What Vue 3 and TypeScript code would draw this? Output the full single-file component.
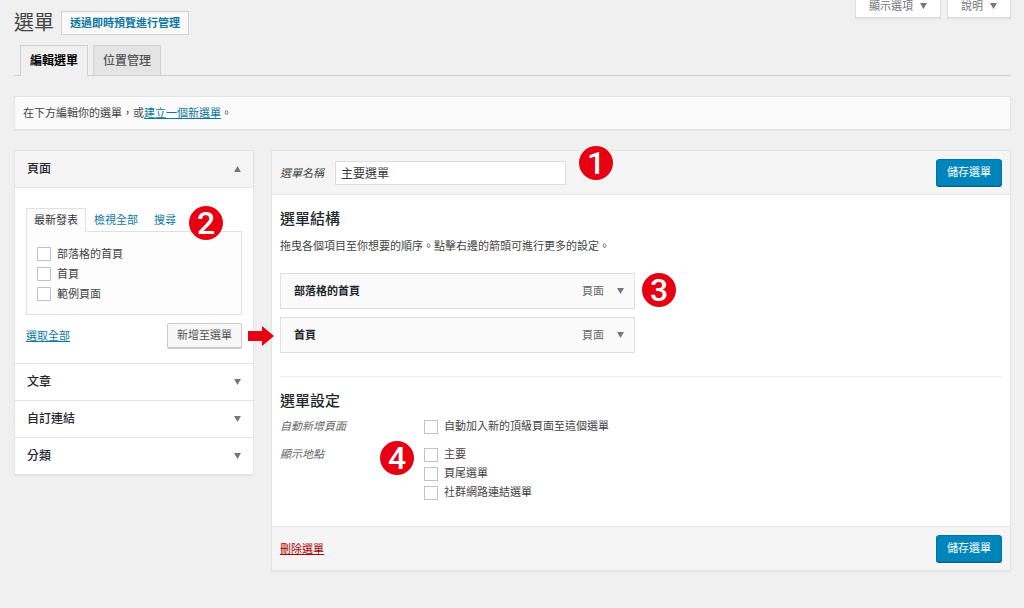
<script setup lang="ts">
import { ref } from 'vue'

interface Choice {
  id: string
  label: string
  checked: boolean
}

const menuName = ref('主要選單')

const pages = ref<Choice[]>([
  { id: 'page-blog', label: '部落格的首頁', checked: false },
  { id: 'page-home', label: '首頁', checked: false },
  { id: 'page-sample', label: '範例頁面', checked: false },
])

const closedSections: string[] = ['文章', '自訂連結', '分類']

const menuItems: { title: string; type: string }[] = [
  { title: '部落格的首頁', type: '頁面' },
  { title: '首頁', type: '頁面' },
]

const autoAdd = ref(false)

const locations = ref<Choice[]>([
  { id: 'loc-primary', label: '主要', checked: false },
  { id: 'loc-footer', label: '頁尾選單', checked: false },
  { id: 'loc-social', label: '社群網路連結選單', checked: false },
])

function selectAll(): void {
  pages.value.forEach((p) => (p.checked = true))
}
</script>

<template>
  <div class="page">
    <header class="top">
      <div class="title">
        <h1>選單</h1>
        <a class="title-action" href="#preview">透過即時預覽進行管理</a>
      </div>
      <div class="meta">
        <button type="button">
          顯示選項
          <svg class="tri" viewBox="0 0 8 7" aria-hidden="true"><path d="M0 0h8L4 7z" /></svg>
        </button>
        <button type="button">
          說明
          <svg class="tri" viewBox="0 0 8 7" aria-hidden="true"><path d="M0 0h8L4 7z" /></svg>
        </button>
      </div>
    </header>

    <nav class="tabs">
      <a class="active" href="#edit" aria-current="page">編輯選單</a>
      <a href="#locations">位置管理</a>
    </nav>

    <p class="notice">在下方編輯你的選單，或<a href="#new">建立一個新選單</a>。</p>

    <div class="columns">
      <aside class="sidebar">
        <h3 class="section-head open">
          <button type="button" aria-expanded="true">
            頁面
            <svg class="tri" viewBox="0 0 8 7" aria-hidden="true"><path d="M0 7h8L4 0z" /></svg>
          </button>
        </h3>
        <div class="section-body">
          <div class="mini-tabs">
            <a class="active" href="#recent">最新發表</a>
            <a href="#all">檢視全部</a>
            <a href="#search">搜尋</a>
            <span class="badge badge-2">2</span>
          </div>
          <div class="mini-panel">
            <label v-for="p in pages" :key="p.id" class="check">
              <input v-model="p.checked" type="checkbox" />{{ p.label }}
            </label>
          </div>
          <div class="section-actions">
            <a href="#select-all" @click.prevent="selectAll">選取全部</a>
            <button class="secondary" type="button">新增至選單</button>
            <svg class="arrow" viewBox="0 0 26 20" aria-hidden="true">
              <path d="M0 5h14V0l12 10-12 10v-5H0z" />
            </svg>
          </div>
        </div>
        <h3 v-for="s in closedSections" :key="s" class="section-head">
          <button type="button" aria-expanded="false">
            {{ s }}
            <svg class="tri" viewBox="0 0 8 7" aria-hidden="true"><path d="M0 0h8L4 7z" /></svg>
          </button>
        </h3>
      </aside>

      <main class="editor">
        <div class="bar bar-top">
          <label class="name-label" for="menu-name">選單名稱</label>
          <div class="name-field">
            <input id="menu-name" v-model="menuName" type="text" />
            <span class="badge badge-1">1</span>
          </div>
          <button class="primary" type="button">儲存選單</button>
        </div>

        <div class="content">
          <h2>選單結構</h2>
          <p class="hint">拖曳各個項目至你想要的順序。點擊右邊的箭頭可進行更多的設定。</p>
          <div class="items-wrap">
            <ul class="items">
              <li v-for="item in menuItems" :key="item.title">
                <strong>{{ item.title }}</strong>
                <span class="type">{{ item.type }}</span>
                <button type="button" :aria-label="item.title">
                  <svg class="tri" viewBox="0 0 8 7" aria-hidden="true"><path d="M0 0h8L4 7z" /></svg>
                </button>
              </li>
            </ul>
            <span class="badge badge-3">3</span>
          </div>

          <section class="settings">
            <h2>選單設定</h2>
            <div class="setting" role="group" aria-labelledby="set-auto">
              <span id="set-auto" class="setting-name">自動新增頁面</span>
              <div class="options">
                <label class="check">
                  <input v-model="autoAdd" type="checkbox" />自動加入新的頂級頁面至這個選單
                </label>
              </div>
            </div>
            <div class="setting" role="group" aria-labelledby="set-loc">
              <span id="set-loc" class="setting-name">顯示地點</span>
              <div class="options">
                <label v-for="l in locations" :key="l.id" class="check">
                  <input v-model="l.checked" type="checkbox" />{{ l.label }}
                </label>
                <span class="badge badge-4">4</span>
              </div>
            </div>
          </section>
        </div>

        <div class="bar bar-bottom">
          <a class="delete" href="#delete">刪除選單</a>
          <button class="primary" type="button">儲存選單</button>
        </div>
      </main>
    </div>
  </div>
</template>

<style>
body {
  background: #f0f0f0;
}
</style>

<style scoped>
.page,
.page * {
  box-sizing: border-box;
}

.page {
  padding: 0 13px 32px 14px;
  color: #444;
  font: 11px/20px "Liberation Sans", "Noto Sans CJK TC", sans-serif;
}

h1,
h2,
h3,
p,
ul {
  margin: 0;
  padding: 0;
}

button,
input {
  font: inherit;
  color: inherit;
}

button {
  cursor: pointer;
}

a {
  color: #0f78a0;
}

.tri {
  flex: none;
  width: 7px;
  height: 6px;
  fill: #72777c;
}

.top {
  display: flex;
  justify-content: space-between;
  align-items: flex-start;
}

.title {
  display: flex;
  align-items: center;
  gap: 7px;
  padding-top: 11px;
}

h1 {
  color: #444;
  font-size: 20px;
  font-weight: 400;
  line-height: 24px;
}

.title-action {
  padding: 0 8px;
  border: 1px solid #d2d2d2;
  background: #f9f9f9;
  font-weight: 700;
  line-height: 22px;
  text-decoration: none;
}

.meta {
  display: flex;
  gap: 6px;
}

.meta button {
  display: flex;
  align-items: center;
  gap: 7px;
  padding: 0 13px 5px;
  border: 1px solid #ddd;
  border-top: 0;
  background: #fff;
  box-shadow: 0 1px 1px rgba(0, 0, 0, 0.06);
  color: #72777c;
  line-height: 12px;
}

.tabs {
  display: flex;
  gap: 5px;
  margin-top: 10px;
  padding-left: 6px;
  border-bottom: 1px solid #d0d0d0;
}

.tabs a {
  padding: 1px 9px 0;
  border: 1px solid #d0d0d0;
  border-bottom: 0;
  background: #e4e4e4;
  color: #555;
  font-size: 12px;
  font-weight: 500;
  line-height: 28px;
  text-decoration: none;
}

.tabs .active {
  margin-bottom: -1px;
  padding-bottom: 1px;
  background: #f0f0f0;
  color: #000;
  font-weight: 700;
}

.notice {
  margin-top: 20px;
  padding: 6px 8px;
  border: 1px solid #e4e4e4;
  background: #fbfbfb;
  box-shadow: 0 1px 1px rgba(0, 0, 0, 0.04);
}

.columns {
  display: flex;
  align-items: flex-start;
  gap: 17px;
  margin-top: 20px;
}

.sidebar {
  flex: none;
  width: 240px;
  border: 1px solid #e4e4e4;
  background: #fff;
  box-shadow: 0 1px 1px rgba(0, 0, 0, 0.05);
}

.section-head {
  border-top: 1px solid #e4e4e4;
}

.section-head.open {
  border-top: 0;
  border-bottom: 1px solid #e4e4e4;
  background: #f5f5f5;
}

.section-head button {
  display: flex;
  justify-content: space-between;
  align-items: center;
  width: 100%;
  padding: 0 12px;
  border: 0;
  background: none;
  color: #23282d;
  font-size: 12px;
  font-weight: 500;
  line-height: 36px;
}

.section-body {
  padding: 20px 11px 15px;
}

.mini-tabs {
  position: relative;
  display: flex;
  line-height: 22px;
}

.mini-tabs a {
  padding: 0 7px;
  border: 0;
  text-decoration: none;
}

.mini-tabs a + a {
  padding: 1px 8px 0;
}

.mini-tabs .active {
  z-index: 1;
  margin-bottom: -1px;
  border: 1px solid #e1e1e1;
  border-bottom: 0;
  background: #fdfdfd;
  color: #32373c;
}

.mini-panel {
  padding: 12px 10px 10px;
  border: 1px solid #e1e1e1;
  background: #fdfdfd;
}

.check {
  display: flex;
  align-items: center;
  gap: 6px;
}

.check input {
  appearance: none;
  flex: none;
  width: 14px;
  height: 14px;
  margin: 0;
  border: 1px solid #bfc3c7;
  background: #fff;
}

.check input:checked {
  background: #0f78a0;
  box-shadow: inset 0 0 0 2px #fff;
}

.section-actions {
  position: relative;
  display: flex;
  justify-content: space-between;
  align-items: center;
  margin-top: 8px;
}

.secondary {
  padding: 0 9px;
  border: 1px solid #ccc;
  border-radius: 2px;
  background: #f7f7f7;
  box-shadow: 0 1px 0 #ccc;
  color: #555;
  line-height: 23px;
}

.arrow {
  position: absolute;
  top: 3px;
  right: -32px;
  z-index: 2;
  width: 26px;
  height: 20px;
  fill: #e60012;
}

.editor {
  flex: 1;
  min-width: 0;
  border: 1px solid #e4e4e4;
  background: #fff;
  box-shadow: 0 1px 1px rgba(0, 0, 0, 0.05);
}

.bar {
  display: flex;
  align-items: center;
  padding: 8px;
  background: #f5f5f5;
}

.bar-top {
  border-bottom: 1px solid #e4e4e4;
}

.bar-bottom {
  border-top: 1px solid #e4e4e4;
}

.name-label {
  margin-right: 11px;
  font-style: italic;
}

.name-field {
  position: relative;
}

.name-field input {
  display: block;
  width: 231px;
  height: 24px;
  padding: 0 5px;
  border: 1px solid #ddd;
  background: #fff;
  color: #32373c;
  font-size: 12px;
}

.primary {
  margin-left: auto;
  padding: 0 10px;
  border: 1px solid #0073aa;
  border-radius: 3px;
  background: #0085ba;
  box-shadow: 0 1px 0 #006799;
  color: #fff;
  line-height: 25px;
}

.content {
  padding: 14px 8px 24px;
}

h2 {
  color: #23282d;
  font-size: 15px;
  font-weight: 500;
  line-height: 20px;
}

.hint {
  margin-top: 7px;
}

.items-wrap {
  position: relative;
  width: 355px;
  margin-top: 17px;
}

.items {
  display: grid;
  gap: 8px;
  list-style: none;
}

.items li {
  display: flex;
  align-items: center;
  padding: 0 10px 0 13px;
  border: 1px solid #dfdfdf;
  background: #fafafa;
  line-height: 34px;
}

.items strong {
  flex: 1;
  color: #23282d;
}

.type {
  color: #666;
}

.items button {
  display: flex;
  margin-left: 13px;
  padding: 0;
  border: 0;
  background: none;
}

.settings {
  margin-top: 23px;
  padding-top: 14px;
  border-top: 1px solid #eee;
}

.setting {
  display: grid;
  grid-template-columns: 144px 1fr;
  margin-top: 9px;
  line-height: 19px;
}

.setting:first-of-type {
  margin-top: 6px;
}

.setting-name {
  color: #666;
  font-style: italic;
}

.options {
  position: relative;
}

.delete {
  color: #a00;
}

.badge {
  position: absolute;
  z-index: 2;
  width: 34px;
  height: 34px;
  border-radius: 50%;
  background: #e60012;
  color: #fff;
  font: 500 32px/34px Roboto, sans-serif;
  text-align: center;
}

.badge-1 {
  top: -15px;
  right: -47px;
}

.badge-2 {
  top: -2px;
  left: 163px;
}

.badge-3 {
  top: 0;
  right: -41px;
}

.badge-4 {
  top: -4px;
  left: -44px;
}
</style>
